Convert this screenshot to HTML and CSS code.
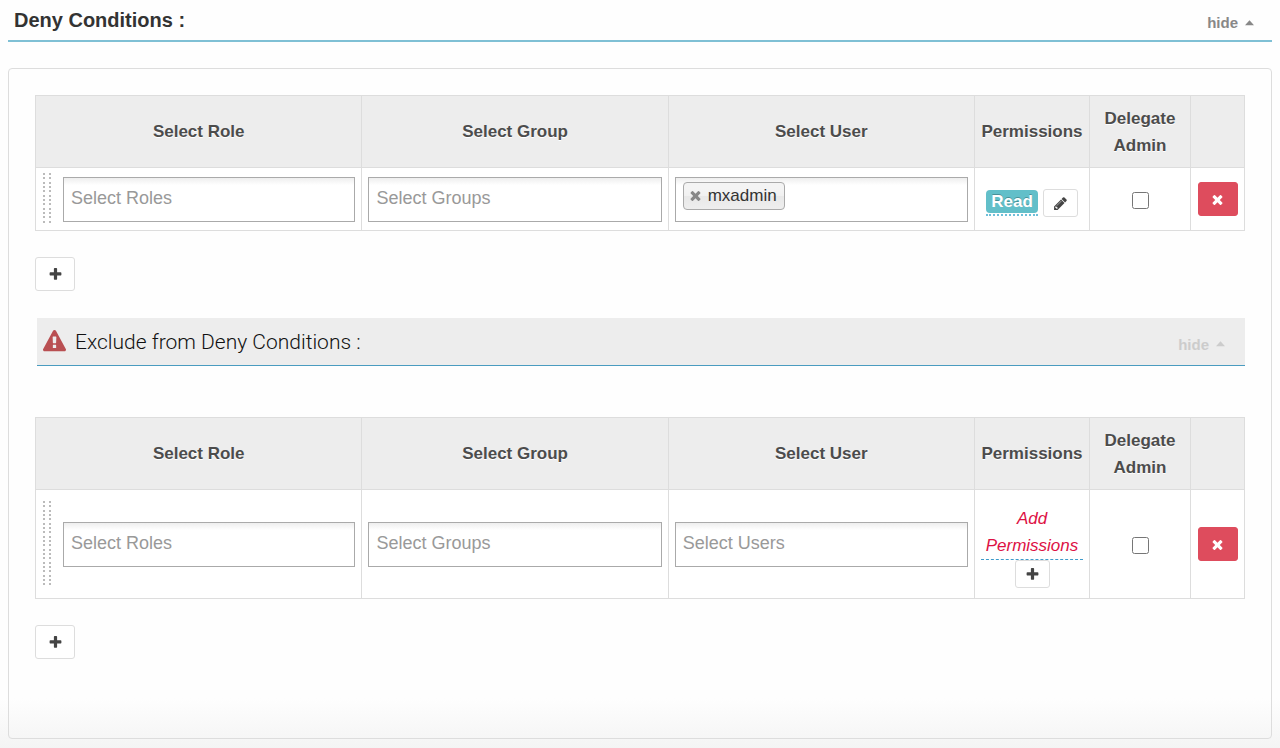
FILE: index.html
```
<!DOCTYPE html>
<html lang="en">
<head>
  <meta charset="utf-8">
  <title>Deny Conditions</title>
  <link rel="stylesheet" href="styles.css">
</head>
<body>
  <svg class="sprite" aria-hidden="true">
    <symbol id="plus" viewBox="0 0 1792 1792"><path d="M1600 736v192q0 40-28 68t-68 28h-416v416q0 40-28 68t-68 28h-192q-40 0-68-28t-28-68v-416h-416q-40 0-68-28t-28-68v-192q0-40 28-68t68-28h416v-416q0-40 28-68t68-28h192q40 0 68 28t28 68v416h416q40 0 68 28t28 68z"/></symbol>
    <symbol id="times" viewBox="0 0 1792 1792"><path d="M1490 1322q0 40-28 68l-136 136q-28 28-68 28t-68-28l-294-294-294 294q-28 28-68 28t-68-28l-136-136q-28-28-28-68t28-68l294-294-294-294q-28-28-28-68t28-68l136-136q28-28 68-28t68 28l294 294 294-294q28-28 68-28t68 28l136 136q28 28 28 68t-28 68l-294 294 294 294q28 28 28 68z"/></symbol>
    <symbol id="pencil" viewBox="0 0 1792 1792"><path d="M491 1536l91-91-235-235-91 91v107h128v128h107zm523-928q0-22-22-22-10 0-17 7l-542 542q-7 7-7 17 0 22 22 22 10 0 17-7l542-542q7-7 7-17zm-54-192l416 416-832 832h-416v-416zm683 96q0 53-37 90l-166 166-416-416 166-165q36-38 90-38 53 0 91 38l235 234q37 39 37 91z"/></symbol>
    <symbol id="warning" viewBox="0 0 1792 1792"><path d="M1024 1375v-190q0-14-9.500-23.500t-22.500-9.500h-192q-13 0-22.500 9.500t-9.500 23.500v190q0 14 9.500 23.500t22.500 9.500h192q13 0 22.500-9.500t9.500-23.500zm-2-374l18-459q0-12-10-19-13-11-24-11h-220q-11 0-24 11-10 7-10 21l17 457q0 10 10 16.500t24 6.500h185q14 0 23.500-6.500t10.500-16.500zm-14-934l768 1408q35 63-2 126-17 29-46.500 46t-63.500 17h-1536q-34 0-63.500-17t-46.500-46q-37-63-2-126l768-1408q17-31 47-49t65-18 65 18 47 49z"/></symbol>
    <symbol id="caret" viewBox="0 0 10 6"><path d="M5 0L10 5.500H0z"/></symbol>
  </svg>

  <div class="heading">
    <h3>Deny Conditions :</h3>
    <a href="#deny" class="hide-link">hide <svg class="caret"><use href="#caret"/></svg></a>
  </div>

  <div class="panel" id="deny">
    <table class="conditions">
      <colgroup>
        <col class="col-role"><col><col><col class="col-perm"><col class="col-admin"><col class="col-action">
      </colgroup>
      <thead>
        <tr>
          <th>Select Role</th>
          <th>Select Group</th>
          <th>Select User</th>
          <th>Permissions</th>
          <th>Delegate Admin</th>
          <th></th>
        </tr>
      </thead>
      <tbody>
        <tr>
          <td>
            <div class="role">
              <span class="handle"></span>
              <input type="text" class="field" placeholder="Select Roles" aria-label="Select Roles">
            </div>
          </td>
          <td><input type="text" class="field" placeholder="Select Groups" aria-label="Select Groups"></td>
          <td>
            <div class="field tokens">
              <span class="token">
                <button type="button" aria-label="Remove mxadmin"><svg class="icon"><use href="#times"/></svg></button>
                mxadmin
              </span>
              <input type="text" aria-label="Select Users">
            </div>
          </td>
          <td class="perm">
            <div class="perm-set">
              <a href="#" class="editable"><span class="label">Read</span></a>
              <button type="button" class="btn btn-small" aria-label="Edit permissions"><svg class="icon"><use href="#pencil"/></svg></button>
            </div>
          </td>
          <td class="center"><input type="checkbox" class="check" aria-label="Delegate Admin"></td>
          <td class="center"><button type="button" class="btn btn-danger" aria-label="Delete"><svg class="icon"><use href="#times"/></svg></button></td>
        </tr>
      </tbody>
    </table>

    <button type="button" class="btn btn-add" aria-label="Add condition"><svg class="icon"><use href="#plus"/></svg></button>

    <div class="sub-heading">
      <svg class="warning"><use href="#warning"/></svg>
      <h4>Exclude from Deny Conditions :</h4>
      <a href="#exclude" class="hide-link">hide <svg class="caret"><use href="#caret"/></svg></a>
    </div>

    <table class="conditions" id="exclude">
      <colgroup>
        <col class="col-role"><col><col><col class="col-perm"><col class="col-admin"><col class="col-action">
      </colgroup>
      <thead>
        <tr>
          <th>Select Role</th>
          <th>Select Group</th>
          <th>Select User</th>
          <th>Permissions</th>
          <th>Delegate Admin</th>
          <th></th>
        </tr>
      </thead>
      <tbody>
        <tr>
          <td>
            <div class="role">
              <span class="handle handle-tall"></span>
              <input type="text" class="field" placeholder="Select Roles" aria-label="Select Roles">
            </div>
          </td>
          <td><input type="text" class="field" placeholder="Select Groups" aria-label="Select Groups"></td>
          <td><input type="text" class="field" placeholder="Select Users" aria-label="Select Users"></td>
          <td class="perm-empty">
            <a href="#" class="add-perm">Add Permissions</a>
            <button type="button" class="btn btn-small" aria-label="Add permissions"><svg class="icon"><use href="#plus"/></svg></button>
          </td>
          <td class="center"><input type="checkbox" class="check" aria-label="Delegate Admin"></td>
          <td class="center"><button type="button" class="btn btn-danger" aria-label="Delete"><svg class="icon"><use href="#times"/></svg></button></td>
        </tr>
      </tbody>
    </table>

    <button type="button" class="btn btn-add" aria-label="Add exclusion"><svg class="icon"><use href="#plus"/></svg></button>
  </div>
</body>
</html>
```
FILE: styles.css
```
* {
  box-sizing: border-box;
}

html {
  min-height: 100%;
  background: linear-gradient(to top, #f4f4f4, #fefefe 50px);
}

body {
  margin: 0;
  padding: 0 8px 9px;
  font-family: "Helvetica Neue", "Liberation Sans", Arial, sans-serif;
  font-size: 17px;
  line-height: 27px;
  color: #333;
}

.sprite {
  display: none;
}

.icon {
  display: block;
  width: 15px;
  height: 15px;
  fill: currentColor;
}

.heading {
  display: flex;
  justify-content: space-between;
  align-items: center;
  height: 42px;
  padding: 0 18px 0 6px;
  border-bottom: 2px solid #7fc0d5;
}

.heading h3 {
  margin: 0;
  font-size: 20px;
}

.hide-link {
  display: flex;
  align-items: center;
  gap: 7px;
  padding-top: 5px;
  font-size: 15px;
  font-weight: bold;
  color: #888;
  text-decoration: none;
}

.caret {
  width: 9px;
  height: 6px;
  fill: currentColor;
}

.panel {
  margin-top: 26px;
  padding: 26px 26px 79px;
  border: 1px solid #ddd;
  border-radius: 4px;
}

/* tables */
.conditions {
  width: 100%;
  table-layout: fixed;
  border-collapse: collapse;
}

.col-role {
  width: 27%;
}

.col-perm {
  width: 115px;
}

.col-admin {
  width: 101px;
}

.col-action {
  width: 54px;
}

.conditions th,
.conditions td {
  padding: 5px 6px;
  border: 1px solid #ddd;
}

.conditions th {
  height: 72px;
  background: #ededed;
  color: #4c4c4c;
  text-shadow: 0 1px 0 #fff;
}

.conditions td {
  background: #fff;
}

.conditions .center {
  text-align: center;
}

.role {
  display: flex;
  align-items: center;
  gap: 12px;
  padding-left: 1px;
}

/* drag handle, two columns of dots */
.handle {
  flex: none;
  width: 8px;
  height: 52px;
  background:
    linear-gradient(transparent 2px, #fff 2px 4px, transparent 4px 6px, #fff 6px 9px, transparent 9px 11px, #fff 11px) 0 0 / 100% 13px,
    linear-gradient(to right, #bbb 2px, transparent 2px) 0 0 / 6px 100%;
}

.handle-tall {
  height: 86px;
}

.field {
  display: block;
  width: 100%;
  height: 45px;
  padding: 0 7px;
  border: 1px solid #aaa;
  background: linear-gradient(#eee, #fff 7px);
  font: inherit;
  color: #333;
}

.field::placeholder {
  color: #999;
  font-size: 18px;
}

.tokens {
  display: flex;
  align-items: flex-start;
  padding: 4px 7px;
}

.tokens input {
  flex: 1;
  min-width: 0;
  height: 27px;
  border: 0;
  background: none;
  font: inherit;
  outline: none;
}

.token {
  display: flex;
  align-items: center;
  gap: 5px;
  height: 28px;
  padding: 0 7px 0 4px;
  border: 1px solid #aaa;
  border-radius: 4px;
  background: linear-gradient(#f4f4f4 20%, #f0f0f0 50%, #e8e8e8 52%, #eee);
}

.token button {
  padding: 0;
  border: 0;
  background: none;
  color: #888;
  cursor: pointer;
}

/* buttons */
.btn {
  display: inline-flex;
  align-items: center;
  justify-content: center;
  width: 40px;
  height: 34px;
  padding: 0;
  border: 1px solid #ddd;
  border-radius: 3px;
  background: #fff;
  color: #444;
  vertical-align: middle;
  cursor: pointer;
}

.btn-small {
  width: 35px;
  height: 28px;
}

.btn-danger {
  border-color: #de4c5d;
  background: #de4c5d;
  color: #fff;
}

.btn-add {
  display: flex;
  margin-top: 26px;
}

/* permissions */
.conditions .perm {
  padding: 12px 6px 4px;
}

.perm-set {
  display: flex;
  justify-content: center;
  align-items: center;
  gap: 5px;
}

.editable {
  border-bottom: 2px dotted #6fbfd9;
  text-decoration: none;
}

.editable,
.label {
  display: block;
}

.label {
  padding: 1px 5px 0;
  margin-bottom: 1px;
  border-radius: 4px;
  background: #62bfc9;
  color: #fff;
  font-weight: bold;
  line-height: 22px;
  text-shadow: 0 -1px 0 rgba(0, 0, 0, 0.25);
}

.conditions .perm-empty {
  padding: 15px 6px 10px;
  text-align: center;
}

.add-perm {
  display: block;
  border-bottom: 1px dashed #3d9bcb;
  color: #dd1144;
  font-style: italic;
  text-decoration: none;
}

.perm-empty .btn {
  display: flex;
  margin: 0 auto;
}

.check {
  width: 17px;
  height: 17px;
  margin: 0;
  vertical-align: middle;
}

/* exclude bar */
.sub-heading {
  display: flex;
  align-items: center;
  gap: 9px;
  height: 48px;
  margin: 27px 0 51px 2px;
  padding: 0 20px 0 6px;
  border-bottom: 1px solid #4a9cc0;
  background: #ededed;
}

.warning {
  width: 23px;
  height: 23px;
  fill: #b94f52;
}

.sub-heading h4 {
  flex: 1;
  margin: 0;
  padding-top: 2px;
  font-family: "Helvetica Neue", Roboto, sans-serif;
  font-size: 21px;
  font-weight: 300;
  color: #111;
}

.sub-heading .hide-link {
  color: #ccc;
}
```
